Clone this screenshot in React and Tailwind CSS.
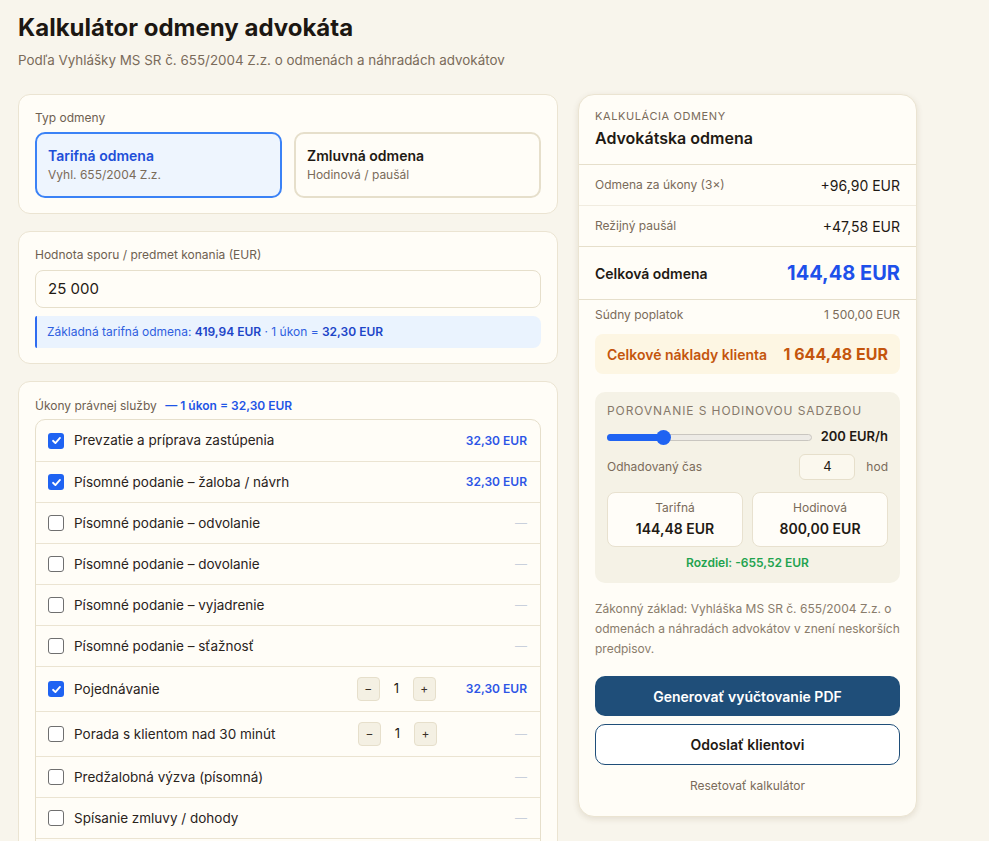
import React from "react";

const F = { fontFamily: "Inter, 'Noto Sans', sans-serif" };

function Check({ on }) {
  if (on)
    return (
      <span className="w-4 h-4 rounded-[3px] bg-[#1f63f2] flex items-center justify-center shrink-0">
        <svg width="11" height="11" viewBox="0 0 12 12" fill="none">
          <path d="M2.2 6.3 4.8 8.8 9.8 3.2" stroke="white" strokeWidth="2" strokeLinecap="round" strokeLinejoin="round" />
        </svg>
      </span>
    );
  return <span className="w-4 h-4 rounded-[3px] border border-[#6f6f6f] bg-white shrink-0" />;
}

function Stepper() {
  return (
    <div className="flex items-center">
      <span className="w-[23px] h-6 rounded-[4px] bg-[#f4f0e3] border border-[#e6dfcb] flex items-center justify-center text-[12px] text-[#3a3128]">−</span>
      <span className="w-[33px] text-center text-[13px] text-[#1f1a14]">1</span>
      <span className="w-[23px] h-6 rounded-[4px] bg-[#f4f0e3] border border-[#e6dfcb] flex items-center justify-center text-[12px] text-[#3a3128]">+</span>
    </div>
  );
}

const rows = [
  { t: "Prevzatie a príprava zastúpenia", on: true },
  { t: "Písomné podanie – žaloba / návrh", on: true },
  { t: "Písomné podanie – odvolanie" },
  { t: "Písomné podanie – dovolanie" },
  { t: "Písomné podanie – vyjadrenie" },
  { t: "Písomné podanie – sťažnosť" },
  { t: "Pojednávanie", on: true, step: true },
  { t: "Porada s klientom nad 30 minút", step: true },
  { t: "Predžalobná výzva (písomná)" },
  { t: "Spísanie zmluvy / dohody" },
  { t: "Návrh na vykonanie exekúcie" },
  { t: "Účasť pri obhliadke" },
];

export default function App() {
  return (
    <div style={F} className="min-h-screen bg-[#f8f5ec] text-[#1f1a14] pl-[18px] pt-3 pb-10">
      <h1 className="text-[24px] leading-8 font-bold tracking-[0px] text-[#1c1712]">Kalkulátor odmeny advokáta</h1>
      <p className="mt-[6px] text-[13.4px] leading-5 text-[#7a6b5a]">Podľa Vyhlášky MS SR č. 655/2004 Z.z. o odmenách a náhradách advokátov</p>

      <div className="mt-6 flex items-start gap-5">
        {/* left column */}
        <div className="w-[540px] flex flex-col gap-[17px]">
          <div className="rounded-xl border border-[#ebe4d2] bg-[#fffdf7] px-4 pt-[15px] pb-[15px]">
            <div className="text-[12px] leading-4 text-[#6e6051]">Typ odmeny</div>
            <div className="mt-[6px] grid grid-cols-2 gap-3">
              <div className="h-[66px] rounded-[10px] border-2 border-[#3b82f6] bg-[#eef5fe] px-[11px] pt-[12px]">
                <div className="text-[14px] leading-5 font-semibold text-[#1d4fd8]">Tarifná odmena</div>
                <div className="mt-px text-[12px] leading-4 text-[#7a6b5a]">Vyhl. 655/2004 Z.z.</div>
              </div>
              <div className="h-[66px] rounded-[10px] border-2 border-[#e6dfcb] bg-[#fffdf7] px-[11px] pt-[12px]">
                <div className="text-[14px] leading-5 font-semibold text-[#1f1a14]">Zmluvná odmena</div>
                <div className="mt-px text-[12px] leading-4 text-[#7a6b5a]">Hodinová / paušál</div>
              </div>
            </div>
          </div>

          <div className="rounded-xl border border-[#ebe4d2] bg-[#fffdf7] px-4 pt-[15px] pb-[15px]">
            <div className="text-[12px] leading-4 text-[#6e6051]">Hodnota sporu / predmet konania (EUR)</div>
            <div className="mt-[7px] h-[38px] rounded-lg border border-[#e6dfcb] bg-[#fffdf7] px-3 flex items-center text-[15px] text-[#1f1a14]">25 000</div>
            <div className="mt-2 h-8 rounded-r-lg rounded-l-[2px] border-l-2 border-[#2f6cf0] bg-[#eaf3fe] pl-[10px] flex items-center text-[12px] text-[#2f5fe0]">
              <span>Základná tarifná odmena:&nbsp;</span>
              <span className="font-semibold text-[#1d45c8]">419,94 EUR</span>
              <span>&nbsp;· 1 úkon =&nbsp;</span>
              <span className="font-semibold text-[#1d45c8]">32,30 EUR</span>
            </div>
          </div>

          <div className="rounded-xl border border-[#ebe4d2] bg-[#fffdf7] px-4 pt-[16px] pb-4">
            <div className="text-[12px] leading-4 text-[#6e6051]">
              Úkony právnej služby <span className="ml-[5px] font-semibold text-[#1f55e6]">— 1 úkon = 32,30 EUR</span>
            </div>
            <div className="mt-[5px] rounded-[10px] border border-[#e6dfcb] overflow-hidden">
              {rows.map((r, i) => (
                <div
                  key={i}
                  className={`${r.step ? "h-[45px]" : "h-[41px]"} flex items-center pl-3 pr-[13px] ${i > 0 ? "border-t border-[#ebe4d2]" : ""}`}
                >
                  <Check on={r.on} />
                  <span className="ml-[10px] flex-1 text-[13.5px] text-[#2a231c]">{r.t}</span>
                  {r.step && (
                    <div className="mr-[30px]">
                      <Stepper />
                    </div>
                  )}
                  {r.on ? (
                    <span className="text-[12px] font-semibold text-[#2d55e6]">32,30 EUR</span>
                  ) : (
                    <span className="w-[60px] text-right text-[12px] text-[#c9d0dc]">—</span>
                  )}
                </div>
              ))}
            </div>
          </div>
        </div>

        {/* right column */}
        <div className="w-[339px] rounded-2xl border border-[#ebe4d2] bg-[#fffdf7] shadow-[0_2px_6px_rgba(80,60,20,0.12)] pb-[22px]">
          <div className="px-4 pt-[13px] pb-[14px] border-b border-[#e6dfcb]">
            <div className="text-[11px] leading-4 tracking-[0.6px] text-[#7a6b5a]">KALKULÁCIA ODMENY</div>
            <div className="mt-[2px] text-[16px] leading-6 font-semibold text-[#1f1a14]">Advokátska odmena</div>
          </div>
          <div className="h-[41px] px-4 flex items-center justify-between border-b border-[#f1ece0]">
            <span className="text-[12px] text-[#7a6b5a]">Odmena za úkony (3×)</span>
            <span className="text-[14px] text-[#1f1a14]">+96,90 EUR</span>
          </div>
          <div className="h-[41px] px-4 flex items-center justify-between border-b border-[#e6dfcb]">
            <span className="text-[12px] text-[#7a6b5a]">Režijný paušál</span>
            <span className="text-[14px] text-[#1f1a14]">+47,58 EUR</span>
          </div>
          <div className="h-[53px] px-4 flex items-center justify-between border-b border-[#e6dfcb]">
            <span className="text-[14px] font-semibold text-[#1f1a14]">Celková odmena</span>
            <span className="text-[20px] font-bold text-[#1e50ea]">144,48 EUR</span>
          </div>
          <div className="px-4">
            <div className="mt-[7px] h-4 flex items-center justify-between text-[12px] text-[#7a6b5a]">
              <span>Súdny poplatok</span>
              <span>1 500,00 EUR</span>
            </div>
            <div className="mt-[11px] h-10 rounded-lg bg-[#fdf6e3] px-3 flex items-center justify-between">
              <span className="text-[14px] font-semibold text-[#c4550d]">Celkové náklady klienta</span>
              <span className="text-[16px] font-bold text-[#c4550d]">1 644,48 EUR</span>
            </div>

            <div className="mt-[18px] rounded-[10px] bg-[#f5f2e6] px-3 pt-[11px] pb-3">
              <div className="text-[12px] leading-4 tracking-[0.9px] text-[#86796a]">POROVNANIE S HODINOVOU SADZBOU</div>
              <div className="mt-2 h-5 flex items-center gap-[9px]">
                <div className="relative flex-1 h-[7px] rounded-full bg-[#edebe6] border border-[#c9c6c0]">
                  <div className="absolute left-[-1px] top-[-1px] h-[7px] w-[58px] rounded-full bg-[#1f63f2]" />
                  <div className="absolute left-[48px] top-[-5px] w-[15px] h-[15px] rounded-full bg-[#1f63f2]" />
                </div>
                <span className="text-[13px] font-semibold text-[#1f1a14]">200 EUR/h</span>
              </div>
              <div className="mt-[7px] h-[25px] flex items-center">
                <span className="flex-1 text-[12px] text-[#7a6b5a]">Odhadovaný čas</span>
                <span className="w-[56px] h-[26px] rounded-md border border-[#e6dfcb] bg-[#fbf8ee] flex items-center justify-center text-[13px] text-[#1f1a14]">4</span>
                <span className="ml-[11px] text-[12px] text-[#7a6b5a]">hod</span>
              </div>
              <div className="mt-[13px] grid grid-cols-2 gap-[9px]">
                <div className="h-[55px] rounded-lg border border-[#e8e1cf] bg-[#fffdf8] flex flex-col items-center justify-center">
                  <span className="text-[12px] leading-4 text-[#7a6b5a]">Tarifná</span>
                  <span className="mt-[3px] text-[14px] leading-5 font-semibold text-[#1f1a14]">144,48 EUR</span>
                </div>
                <div className="h-[55px] rounded-lg border border-[#e8e1cf] bg-[#fffdf8] flex flex-col items-center justify-center">
                  <span className="text-[12px] leading-4 text-[#7a6b5a]">Hodinová</span>
                  <span className="mt-[3px] text-[14px] leading-5 font-semibold text-[#1f1a14]">800,00 EUR</span>
                </div>
              </div>
              <div className="mt-2 text-center text-[12px] leading-4 font-semibold text-[#1fa34f]">Rozdiel: -655,52 EUR</div>
            </div>

            <p className="mt-[16px] text-[12px] leading-5 text-[#8a7c6b]">
              Zákonný základ: Vyhláška MS SR č. 655/2004 Z.z. o odmenách a náhradách advokátov v znení neskorších predpisov.
            </p>
            <div className="mt-[17px] h-10 rounded-[10px] bg-[#1f4e79] flex items-center justify-center text-[14px] font-semibold text-white">Generovať vyúčtovanie PDF</div>
            <div className="mt-2 h-[41px] rounded-[10px] border border-[#1f4e79] bg-white flex items-center justify-center text-[14px] font-semibold text-[#1f1a14]">Odoslať klientovi</div>
            <div className="mt-[13px] text-center text-[12px] leading-4 text-[#7a6b5a]">Resetovať kalkulátor</div>
          </div>
        </div>
      </div>
    </div>
  );
}
